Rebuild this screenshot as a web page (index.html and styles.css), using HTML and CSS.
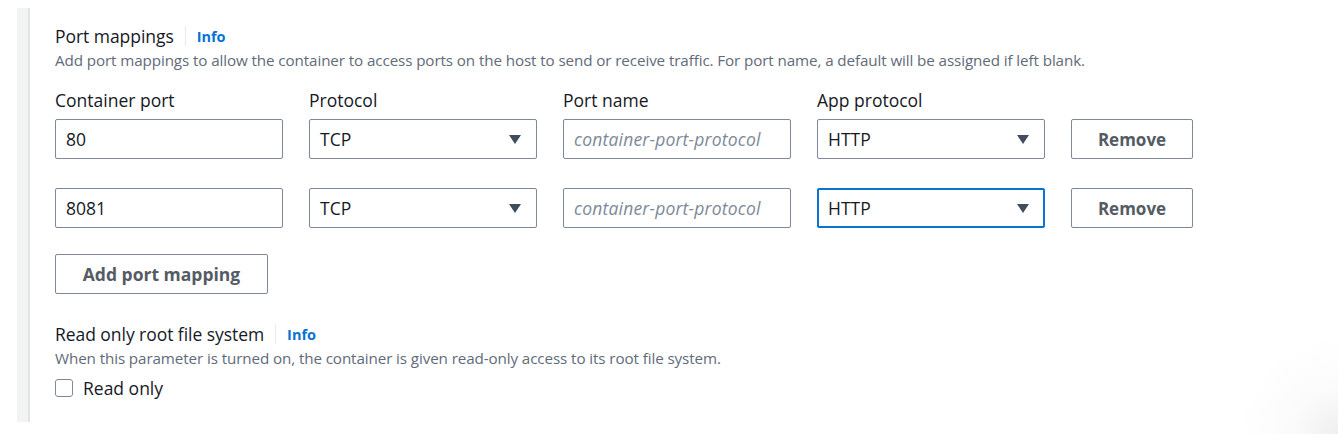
FILE: index.html
```html
<!DOCTYPE html>
<html>
<head>
<meta charset="utf-8">
<link rel="stylesheet" href="styles.css">
</head>
<body>
<div class="page">
  <div class="rail"></div>
  <div class="content">
    <section class="field">
      <div class="head">
        <span class="title">Port mappings</span>
        <span class="sep"></span>
        <a class="info">Info</a>
      </div>
      <p class="desc">Add port mappings to allow the container to access ports on the host to send or receive traffic. For port name, a default will be assigned if left blank.</p>
      <div class="grid">
        <div class="label">Container port</div>
        <div class="label">Protocol</div>
        <div class="label">Port name</div>
        <div class="label">App protocol</div>
        <div></div>

        <div class="box">80</div>
        <div class="box select">TCP<span class="caret"></span></div>
        <div class="box ph">container-port-protocol</div>
        <div class="box select">HTTP<span class="caret"></span></div>
        <button class="btn rm">Remove</button>

        <div class="box">8081</div>
        <div class="box select">TCP<span class="caret"></span></div>
        <div class="box ph">container-port-protocol</div>
        <div class="box select focus">HTTP<span class="caret"></span></div>
        <button class="btn rm">Remove</button>
      </div>
      <button class="btn add">Add port mapping</button>
    </section>
    <section class="field ro">
      <div class="head">
        <span class="title">Read only root file system</span>
        <span class="sep"></span>
        <a class="info">Info</a>
      </div>
      <p class="desc">When this parameter is turned on, the container is given read-only access to its root file system.</p>
      <label class="check"><span class="cb"></span>Read only</label>
    </section>
  </div>
</div>
</body>
</html>
```
FILE: styles.css
```css
* { box-sizing: border-box; }
html, body { margin: 0; padding: 0; }
html { background: radial-gradient(circle at 1338px 434px, #efefef 0, #fbfbfb 45px, #fff 100px) #fff; }
body { font-family: "Open Sans", "Noto Sans", sans-serif; color: #16191f; background: transparent; }
.page { display: flex; padding: 8px 0 0 17px; height: 434px; }
.rail { width: 13px; height: 414px; background: #f2f3f3; border-right: 2px solid #e1e4e6; }
.content { padding: 16px 0 0 25px; flex: 1; }
.head { display: flex; align-items: center; height: 24px; }
.title { font-size: 17.5px; line-height: 24px; color: #16191f; letter-spacing: -0.05px; }
.sep { width: 1px; height: 20px; background: #e9ebed; margin: 0 11px 0 11px; }
.info { font-size: 14.5px; font-weight: 700; color: #0972d3; }
.desc { margin: 2px 0 0; font-size: 15.2px; line-height: 20px; color: #5f6b7a; letter-spacing: -0.1px; white-space: nowrap; }
.grid { display: grid; grid-template-columns: repeat(4, 228px) 122px; column-gap: 26px; margin-top: 18px; }
.label { font-size: 17.5px; line-height: 24px; height: 31px; }
.box { height: 40px; border: 1px solid #7d8998; border-radius: 2px; display: flex; align-items: center; padding: 0 10px; font-size: 17.5px; position: relative; margin-bottom: 29px; }
.box.ph { color: #7d8998; font-style: italic; font-size: 17.5px; letter-spacing: 0.2px; }
.box.focus { border: 2px solid #0972d3; padding: 0 9px; }
.caret { position: absolute; right: 15px; top: 15px; width: 0; height: 0; border-left: 6px solid transparent; border-right: 6px solid transparent; border-top: 9px solid #414d5c; }
.box.focus .caret { right: 14px; top: 14px; }
.btn { height: 40px; border: 1px solid #7d8998; border-radius: 2px; background: #fff; color: #545b64; font-family: inherit; font-weight: 700; font-size: 17px; padding: 0; }
.rm { width: 122px; }
.add { width: 213px; margin-top: -3px; font-size: 17.5px; }
.ro { margin-top: 28px; }
.check { display: flex; align-items: center; margin-top: 8px; font-size: 17.5px; line-height: 24px; }
.cb { width: 18px; height: 18px; border: 1.5px solid #7d8998; border-radius: 3px; margin-right: 10px; }
```
